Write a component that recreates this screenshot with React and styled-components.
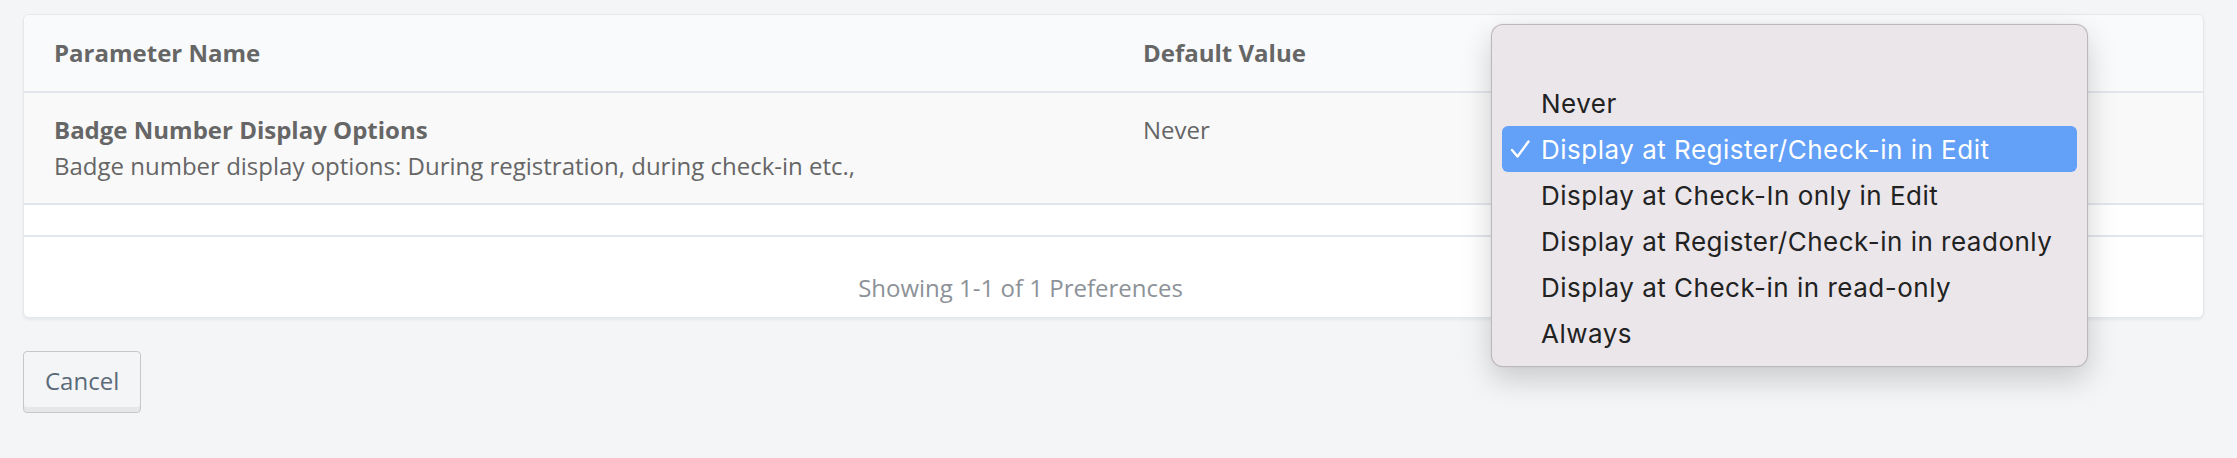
import React from "react";
import styled, { createGlobalStyle } from "styled-components";

const GlobalStyle = createGlobalStyle`
  body {
    margin: 0;
    background: #f4f5f7;
    font-family: "Open Sans", "Liberation Sans", sans-serif;
  }
`;

const Page = styled.div`
  position: relative;
  padding: 14px 33px 46px 23px;
`;

const Card = styled.div`
  background: #fff;
  border: 1px solid #e4e7eb;
  border-radius: 6px;
  box-shadow: 0 2px 3px rgba(0, 0, 0, 0.06);
  overflow: hidden;
`;

const Table = styled.table`
  width: 100%;
  border-collapse: collapse;
  font-size: 24px;
  line-height: 1.5;
  color: #666;
`;

const HeadCell = styled.th`
  text-align: left;
  font-weight: 700;
  padding: 20px 30px;
  background: #f9fafc;
  border-bottom: 2px solid #e3e6ea;
  width: ${(p) => p.$width || "auto"};
`;

const Row = styled.tr`
  background: ${(p) => (p.$shaded ? "#f9f9f9" : "#fff")};
  border-bottom: 2px solid #e3e6ea;
`;

const Cell = styled.td`
  padding: 19px 30px;
  vertical-align: top;
`;

const EmptyCell = styled.td`
  height: 30px;
  padding: 0;
`;

const Name = styled.div`
  font-weight: 700;
`;

const Footer = styled.div`
  padding: 33px 186px 11px 0;
  text-align: center;
  font-size: 24px;
  line-height: 1.5;
  color: #8c9298;
`;

const CancelButton = styled.button`
  margin-top: 33px;
  height: 62px;
  padding: 0 21px 4px;
  font-family: "Open Sans", "Liberation Sans", sans-serif;
  font-size: 24px;
  color: #5b6a79;
  background: #f4f5f7;
  border: 1.5px solid #c6c7c9;
  border-radius: 4px;
  box-shadow: inset 0 -5px 0 #e6e7e9;
`;

const Popup = styled.div`
  position: absolute;
  left: 1491px;
  top: 24px;
  width: 575px;
  padding: 9px 10px 10px;
  background: #ebe6ea;
  border: 1px solid rgba(0, 0, 0, 0.2);
  border-radius: 12px;
  box-shadow: 0 12px 30px rgba(0, 0, 0, 0.18), 0 0 2px rgba(0, 0, 0, 0.1);
  font-family: Inter, "Noto Sans", sans-serif;
`;

const Option = styled.div`
  display: flex;
  align-items: center;
  height: 46px;
  border-radius: 6px;
  font-size: 26px;
  letter-spacing: 0.5px;
  color: ${(p) => (p.$selected ? "#fff" : "#222")};
  background: ${(p) => (p.$selected ? "#63a0f8" : "transparent")};
`;

const CheckSlot = styled.span`
  display: flex;
  align-items: center;
  width: 31px;
  padding-left: 8px;
  height: 100%;
`;

const Check = () => (
  <svg width="20" height="18" viewBox="0 0 20 18">
    <polyline
      points="2,10 7.5,16.5 18.5,1.5"
      fill="none"
      stroke="#fff"
      strokeWidth="2.4"
      strokeLinecap="round"
      strokeLinejoin="round"
    />
  </svg>
);

const options = [
  "",
  "Never",
  "Display at Register/Check-in in Edit",
  "Display at Check-In only in Edit",
  "Display at Register/Check-in in readonly",
  "Display at Check-in in read-only",
  "Always",
];

export default function App() {
  return (
    <>
      <GlobalStyle />
      <Page>
        <Card>
          <Table>
            <thead>
              <tr>
                <HeadCell $width="1029px">Parameter Name</HeadCell>
                <HeadCell $width="360px">Default Value</HeadCell>
                <HeadCell />
              </tr>
            </thead>
            <tbody>
              <Row $shaded>
                <Cell>
                  <Name>Badge Number Display Options</Name>
                  Badge number display options: During registration, during check-in etc.,
                </Cell>
                <Cell>Never</Cell>
                <Cell />
              </Row>
              <Row>
                <EmptyCell colSpan={3} />
              </Row>
            </tbody>
          </Table>
          <Footer>Showing 1-1 of 1 Preferences</Footer>
        </Card>
        <CancelButton>Cancel</CancelButton>

        <Popup>
          {options.map((o, i) => (
            <Option key={i} $selected={i === 2}>
              <CheckSlot>{i === 2 && <Check />}</CheckSlot>
              {o}
            </Option>
          ))}
        </Popup>
      </Page>
    </>
  );
}
